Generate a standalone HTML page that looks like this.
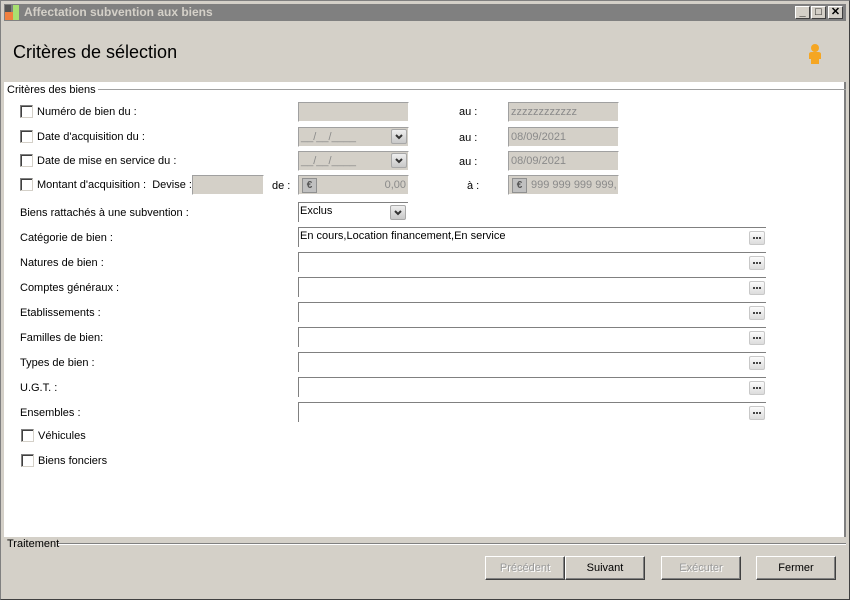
<!DOCTYPE html>
<html><head><meta charset="utf-8"><style>
*{margin:0;padding:0;box-sizing:border-box}
body{width:850px;height:600px;background:#d4d0c8;font-family:"Liberation Sans",sans-serif;font-size:11px;color:#000;position:relative;overflow:hidden}
.a{position:absolute}
.frame{left:0;top:0;width:850px;height:600px;border:1px solid #808080;border-right-color:#404040;border-bottom-color:#404040}
.title{left:4px;top:4px;width:842px;height:17px;background:#808080;color:#d4d0c8;font-weight:bold;font-size:12px;line-height:17px;padding-left:20px}
.wb{top:6px;width:15px;height:13px;background:#d4d0c8;border:1px solid;border-color:#fff #404040 #404040 #fff;font-size:11px;line-height:11px;text-align:center;font-weight:bold}
.white{left:4px;top:82px;width:842px;height:455px;background:#fff;border-right:2px solid #808080}
.lbl{line-height:14px;white-space:nowrap}
.cb{width:13px;height:13px;border:1px solid #808080;border-right-color:#d4d0c8;border-bottom-color:#d4d0c8;background:#fff;box-shadow:inset 1px 1px 0 #404040}
.dis{background:#d4d0c8;border:1px solid #a0a0a0;border-right-color:#fff;border-bottom-color:#fff;color:#8a8a8a;line-height:18px;padding-left:2px;font-size:11px}
.fld{left:298px;width:468px;height:20px;border-top:1px solid #808080;border-left:1px solid #808080;background:#fff;line-height:17px;padding-left:1px}
.ell{right:1px;top:3px;width:16px;height:14px;background:linear-gradient(#fbfbfb,#dcdcdc);border:1px solid #c8c8c8;border-radius:2px}
.dd{width:16px;height:15px;background:linear-gradient(#eee,#c8c8c8);border:1px solid #a8a8a8;border-radius:2px}
.eur{width:15px;height:15px;background:#c0c0c0;border:1px solid #909090;font-size:10px;text-align:center;line-height:13px;color:#555;font-weight:bold}
.btn{top:556px;width:80px;height:24px;border:1px solid;border-color:#fff #404040 #404040 #fff;box-shadow:inset -1px -1px 0 #808080;text-align:center;line-height:22px;font-size:11px}
</style></head><body>
<div class="a frame"></div>
<div class="a title">Affectation subvention aux biens</div>
<div class="a" style="left:5px;top:5px;width:6px;height:15px;background:#555"></div>
<div class="a" style="left:5px;top:12px;width:8px;height:8px;background:#f08040"></div>
<div class="a" style="left:13px;top:5px;width:6px;height:15px;background:#a8e070"></div>
<div class="a wb" style="left:795px">_</div>
<div class="a wb" style="left:811px">□</div>
<div class="a wb" style="left:828px">✕</div>
<div class="a" style="left:13px;top:42px;font-size:18px">Critères de sélection</div>
<svg class="a" style="left:806px;top:43px" width="18" height="22"><circle cx="9" cy="5" r="4" fill="#f5a623"/><path d="M3 11 Q3 9 6 9 L12 9 Q15 9 15 11 L15 16 L13 16 L13 21 L5 21 L5 16 L3 16Z" fill="#f5a623"/></svg>
<div class="a white"></div>
<div class="a" style="left:93px;top:89px;width:753px;height:1px;background:#a0a0a0"></div>
<div class="a lbl" style="left:7px;top:83px;background:#fff;padding-right:2px">Critères des biens</div>

<div class="a cb" style="left:20px;top:105px"></div><div class="a lbl" style="left:37px;top:105px">Numéro de bien du :</div>
<div class="a dis" style="left:298px;top:102px;width:111px;height:20px"></div>
<div class="a lbl" style="left:459px;top:105px">au :</div>
<div class="a dis" style="left:508px;top:102px;width:111px;height:20px">zzzzzzzzzzzz</div>

<div class="a cb" style="left:20px;top:130px"></div><div class="a lbl" style="left:37px;top:130px">Date d'acquisition du :</div>
<div class="a dis" style="left:298px;top:127px;width:111px;height:20px">__/__/____</div><div class="a dd" style="left:391px;top:129px"><svg width="14" height="13"><path d="M4 5 L7 8 L10 5" stroke="#333" stroke-width="2" fill="none"/></svg></div>
<div class="a lbl" style="left:459px;top:131px">au :</div>
<div class="a dis" style="left:508px;top:127px;width:111px;height:20px">08/09/2021</div>

<div class="a cb" style="left:20px;top:154px"></div><div class="a lbl" style="left:37px;top:154px">Date de mise en service du :</div>
<div class="a dis" style="left:298px;top:151px;width:111px;height:20px">__/__/____</div><div class="a dd" style="left:391px;top:153px"><svg width="14" height="13"><path d="M4 5 L7 8 L10 5" stroke="#333" stroke-width="2" fill="none"/></svg></div>
<div class="a lbl" style="left:459px;top:155px">au :</div>
<div class="a dis" style="left:508px;top:151px;width:111px;height:20px">08/09/2021</div>

<div class="a cb" style="left:20px;top:178px"></div><div class="a lbl" style="left:37px;top:178px">Montant d'acquisition :&nbsp; Devise :</div>
<div class="a dis" style="left:192px;top:175px;width:72px;height:20px"></div>
<div class="a lbl" style="left:272px;top:179px">de :</div>
<div class="a dis" style="left:298px;top:175px;width:111px;height:20px;text-align:right;padding-right:2px">0,00</div><div class="a eur" style="left:302px;top:178px">€</div>
<div class="a lbl" style="left:467px;top:179px">à :</div>
<div class="a dis" style="left:508px;top:175px;width:111px;height:20px;padding-left:22px;overflow:hidden;white-space:nowrap">999 999 999 999,</div><div class="a eur" style="left:512px;top:178px">€</div>

<div class="a lbl" style="left:20px;top:206px">Biens rattachés à une subvention :</div>
<div class="a" style="left:298px;top:202px;width:110px;height:20px;border-top:1px solid #808080;border-left:1px solid #808080;padding-left:1px;line-height:16px">Exclus</div><div class="a dd" style="left:390px;top:205px"><svg width="14" height="13"><path d="M4 5 L7 8 L10 5" stroke="#333" stroke-width="2" fill="none"/></svg></div>

<div class="a lbl" style="left:20px;top:231px">Catégorie de bien :</div>
<div class="a fld" style="top:227px">En cours,Location financement,En service<div class="a ell"><svg width="14" height="12"><path d="M3 6h2M6 6h2M9 6h2" stroke="#444" stroke-width="2"/></svg></div></div>
<div class="a lbl" style="left:20px;top:256px">Natures de bien :</div>
<div class="a fld" style="top:252px"><div class="a ell"><svg width="14" height="12"><path d="M3 6h2M6 6h2M9 6h2" stroke="#444" stroke-width="2"/></svg></div></div>
<div class="a lbl" style="left:20px;top:281px">Comptes généraux :</div>
<div class="a fld" style="top:277px"><div class="a ell"><svg width="14" height="12"><path d="M3 6h2M6 6h2M9 6h2" stroke="#444" stroke-width="2"/></svg></div></div>
<div class="a lbl" style="left:20px;top:306px">Etablissements :</div>
<div class="a fld" style="top:302px"><div class="a ell"><svg width="14" height="12"><path d="M3 6h2M6 6h2M9 6h2" stroke="#444" stroke-width="2"/></svg></div></div>
<div class="a lbl" style="left:20px;top:331px">Familles de bien:</div>
<div class="a fld" style="top:327px"><div class="a ell"><svg width="14" height="12"><path d="M3 6h2M6 6h2M9 6h2" stroke="#444" stroke-width="2"/></svg></div></div>
<div class="a lbl" style="left:20px;top:356px">Types de bien :</div>
<div class="a fld" style="top:352px"><div class="a ell"><svg width="14" height="12"><path d="M3 6h2M6 6h2M9 6h2" stroke="#444" stroke-width="2"/></svg></div></div>
<div class="a lbl" style="left:20px;top:381px">U.G.T. :</div>
<div class="a fld" style="top:377px"><div class="a ell"><svg width="14" height="12"><path d="M3 6h2M6 6h2M9 6h2" stroke="#444" stroke-width="2"/></svg></div></div>
<div class="a lbl" style="left:20px;top:406px">Ensembles :</div>
<div class="a fld" style="top:402px"><div class="a ell"><svg width="14" height="12"><path d="M3 6h2M6 6h2M9 6h2" stroke="#444" stroke-width="2"/></svg></div></div>

<div class="a cb" style="left:21px;top:429px"></div><div class="a lbl" style="left:38px;top:429px">Véhicules</div>
<div class="a cb" style="left:21px;top:454px"></div><div class="a lbl" style="left:38px;top:454px">Biens fonciers</div>

<div class="a" style="left:58px;top:543px;width:788px;height:1px;background:#808080"></div>
<div class="a" style="left:58px;top:544px;width:788px;height:1px;background:#fff"></div>
<div class="a lbl" style="left:7px;top:537px">Traitement</div>

<div class="a btn" style="left:485px;color:#9a9a9a;text-shadow:1px 1px 0 #fff">Précédent</div>
<div class="a btn" style="left:565px">Suivant</div>
<div class="a btn" style="left:661px;color:#9a9a9a;text-shadow:1px 1px 0 #fff">Exécuter</div>
<div class="a btn" style="left:756px">Fermer</div>
</body></html>
